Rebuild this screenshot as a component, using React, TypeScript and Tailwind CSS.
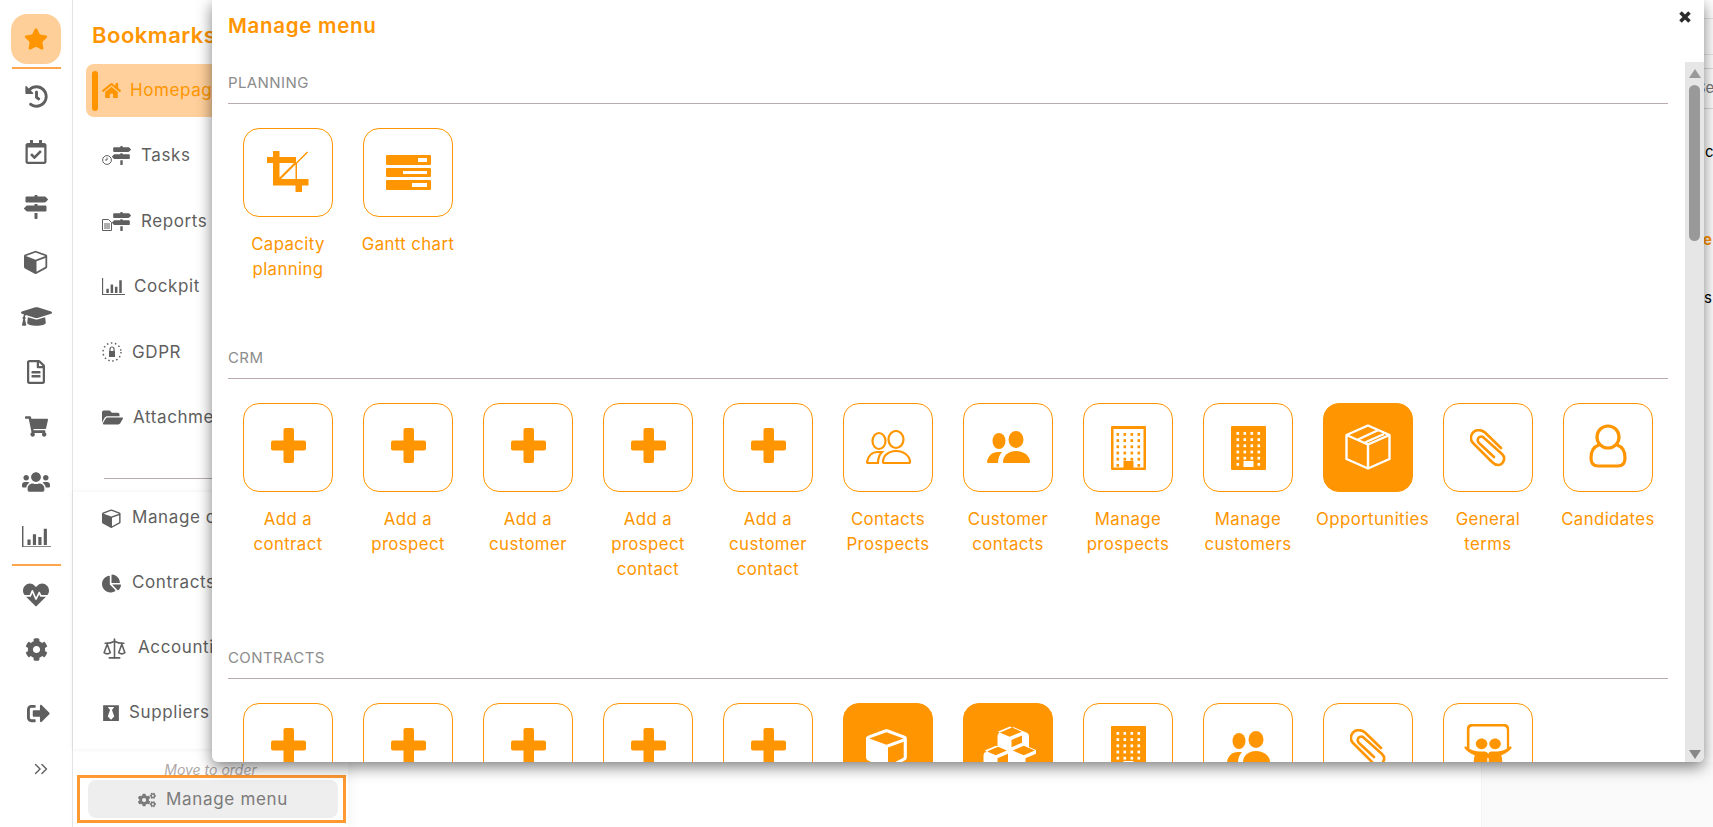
import type { ReactNode } from 'react';
import {
    FaBlackTie,
    FaChartPie,
    FaCog,
    FaCogs,
    FaFolderOpen,
    FaGraduationCap,
    FaHeartbeat,
    FaHistory,
    FaHome,
    FaMapSigns,
    FaRegCalendarCheck,
    FaRegFileAlt,
    FaShoppingCart,
    FaSignOutAlt,
    FaSlideshare,
    FaStar,
    FaUsers,
} from 'react-icons/fa';
import { ChevronsRight, Scale } from 'lucide-react';

const ORANGE = '#ff9500';

function ChartIcon({ size = 29 }: { size?: number }) {
    return (
        <svg width={size} height={size * 0.75} viewBox="0 0 32 24" fill="currentColor">
            <path d="M0 0h1.600v22.400H32V24H0z" />
            <path d="M6 15h3.500v6H6zM12 9h3.500v12H12zM18 12h3.500v9H18zM24 3h3.500v18H24z" />
        </svg>
    );
}

function CubeIcon({ size = 24, color = 'currentColor' }: { size?: number; color?: string }) {
    return (
        <svg width={size} height={size} viewBox="0 0 1792 1792" fill={color}>
            <path d="M896 1629l640-349v-636l-640 233v752zm-64-865l698-254-698-254-698 254zm832-252v768q0 35-18 65t-49 47l-704 384q-28 16-61 16t-61-16l-704-384q-31-17-49-47t-18-65v-768q0-40 23-73t61-47l704-256q22-8 44-8t44 8l704 256q38 14 61 47t23 73z" />
        </svg>
    );
}

function CubesIcon({ size = 56 }: { size?: number }) {
    return (
        <svg width={size} height={size * 0.875} viewBox="0 0 2048 1792" fill="#fff">
            <path d="M640 1632l384-192v-314l-384 164v342zm-64-454l404-173-404-173-404 173zm1088 454l384-192v-314l-384 164v342zm-64-454l404-173-404-173-404 173zm-448-293l384-165v-266l-384 164v267zm-64-379l441-189-441-189-441 189zm1216 676v416q0 36-19 67t-52 47l-448 224q-25 14-57 14t-57-14l-448-224q-4-2-7-4-2 2-7 4l-448 224q-25 14-57 14t-57-14l-448-224q-33-16-52-47t-19-67v-416q0-38 21.500-70t56.500-48l434-186v-400q0-38 21.500-70t56.500-48l448-192q23-10 50-10t50 10l448 192q35 16 56.500 48t21.500 70v400l434 186q36 16 57 48t21 70z" />
        </svg>
    );
}

function PlusIcon() {
    return (
        <svg width="35" height="35" viewBox="0 0 35 35" fill={ORANGE} className="mt-[-4px]">
            <rect x="12.500" y="0" width="10.500" height="35" rx="2" />
            <rect x="0" y="12.500" width="35" height="10" rx="2" />
        </svg>
    );
}

function CropIcon() {
    return (
        <svg width="42" height="42" viewBox="0 0 42 42" fill={ORANGE} className="mt-[-2px]">
            <path d="M6 0h6.500v6H29v5.500l11-11 1 1-11 11V28h11.500v6.500H35V41h-6.500v-6.500H6V12H0V6h6zm6.500 12v14.500L27 12zM28.500 28V13.500L14 28z" />
        </svg>
    );
}

function GanttIcon() {
    return (
        <svg width="45" height="35" viewBox="0 0 45 35" fill={ORANGE} className="mt-[-1px]">
            <path fillRule="evenodd" d="M1 0h43a1 1 0 0 1 1 1v8a1 1 0 0 1-1 1H1a1 1 0 0 1-1-1V1a1 1 0 0 1 1-1zm31 3v4h9V3z" />
            <path fillRule="evenodd" d="M1 13h43a1 1 0 0 1 1 1v7a1 1 0 0 1-1 1H1a1 1 0 0 1-1-1v-7a1 1 0 0 1 1-1zm16 3v3h24v-3z" />
            <path fillRule="evenodd" d="M1 25h43a1 1 0 0 1 1 1v8a1 1 0 0 1-1 1H1a1 1 0 0 1-1-1v-8a1 1 0 0 1 1-1zm25 3v4h15v-4z" />
        </svg>
    );
}

function PeopleIcon({ outline }: { outline?: boolean }) {
    const props = outline
        ? { fill: 'none', stroke: ORANGE, strokeWidth: 2.2 }
        : { fill: ORANGE };
    return (
        <svg width="45" height="34" viewBox="0 0 45 34" {...props} className="mt-[-2px]">
            <ellipse cx="13" cy="11" rx="6.500" ry="8" />
            <ellipse cx="30" cy="9.500" rx="7.500" ry="8.500" />
            <path d="M12 22c-6 0-10 4-11 10a1 1 0 0 0 1 1h10c0-4 1-8 4-11z" />
            <path d="M30 21c-8 0-13 5-13 11a1 1 0 0 0 1 1h25a1 1 0 0 0 1-1c0-6-6-11-14-11z" />
        </svg>
    );
}

function BuildingIcon({ outline }: { outline?: boolean }) {
    const dots: ReactNode[] = [];
    for (let r = 0; r < 6; r++) {
        for (let c = 0; c < 4; c++) {
            if (r === 5 && (c === 1 || c === 2)) continue;
            dots.push(
                <rect
                    key={`${r}-${c}`}
                    x={5.500 + c * 7}
                    y={outline ? 7 + r * 6.200 : 6 + r * 6.200}
                    width="2.600"
                    height="2.800"
                    fill={outline ? ORANGE : '#fff'}
                />
            );
        }
    }
    return (
        <svg width="35" height="44" viewBox="0 0 35 44">
            <rect width="35" height="44" rx="1" fill={ORANGE} />
            {outline && <rect x="2.500" y="3" width="30" height="38.500" fill="#fff" />}
            {dots}
            <rect x="12.500" y="35" width="10" height={outline ? 9 : 6} fill={outline ? ORANGE : '#fff'} />
        </svg>
    );
}

function BoxIcon() {
    return (
        <svg width="46" height="46" viewBox="0 0 46 46" fill="none" stroke="#fff" strokeWidth="2.400" strokeLinejoin="round" className="mt-[-2px]">
            <path d="M23 1.500 44.500 11v24L23 44.500 1.500 35V11z" />
            <path d="M1.500 11 23 20.500 44.500 11M23 20.500v24M13 15.500 33.500 6M20 18.500l19-8.500" />
        </svg>
    );
}

function ClipIcon() {
    return (
        <svg width="36" height="38" viewBox="0 0 36 38" fill="none" stroke={ORANGE} strokeWidth="2.600" strokeLinecap="round">
            <path d="M31 19 15 3.500C10-.5 4 1 2 5c-2 4-1 7 1 9l19 19c4 4 9 4 11 0 2-3 1-6-1-8L13 8c-2-1-5 0-5 2-1 2 0 3 1 4l15 14" />
        </svg>
    );
}

function UserOutlineIcon() {
    return (
        <svg width="38" height="44" viewBox="0 0 38 44" fill="none" stroke={ORANGE} strokeWidth="3.200" className="mt-[-3px]">
            <circle cx="19" cy="13" r="11" />
            <path d="M10 21C4 23 2 29 2 34c0 6 3 8 7 8h20c4 0 7-2 7-8 0-5-2-11-8-13" />
        </svg>
    );
}

// tiny clock and document that sit on the signpost of Tasks and Reports
function SmallClock() {
    return (
        <svg width="10" height="10" viewBox="0 0 10 10" fill="none" stroke="currentColor" strokeWidth="1">
            <circle cx="5" cy="5" r="4.400" />
            <path d="M5 2.500V5H3" />
        </svg>
    );
}

function SmallDoc() {
    return (
        <svg width="10" height="12" viewBox="0 0 10 12" fill="none" stroke="currentColor" strokeWidth="1">
            <path d="M.5.500h6l3 3v8h-9zM2 5h6M2 7h6M2 9h6" />
        </svg>
    );
}

function GdprIcon() {
    return (
        <svg width="20" height="20" viewBox="0 0 20 20" fill="currentColor">
            <circle cx="10" cy="10" r="9" fill="none" stroke="currentColor" strokeWidth="1.500" strokeDasharray="1.500 2.600" />
            <path d="M7 9h6v6H7z" />
            <path d="M8 9V7a2 2 0 0 1 4 0v2" fill="none" stroke="currentColor" strokeWidth="1.200" />
        </svg>
    );
}

type Tile = { label: string; icon: ReactNode; filled?: boolean; labelClass?: string };

const plus = <PlusIcon />;

const planning: Tile[] = [
    { label: 'Capacity\nplanning', icon: <CropIcon /> },
    { label: 'Gantt chart', icon: <GanttIcon /> },
];

const crm: Tile[] = [
    { label: 'Add a\ncontract', icon: plus },
    { label: 'Add a\nprospect', icon: plus },
    { label: 'Add a\ncustomer', icon: plus },
    { label: 'Add a\nprospect\ncontact', icon: plus },
    { label: 'Add a\ncustomer\ncontact', icon: plus },
    { label: 'Contacts\nProspects', icon: <PeopleIcon outline /> },
    { label: 'Customer\ncontacts', icon: <PeopleIcon /> },
    { label: 'Manage\nprospects', icon: <BuildingIcon outline /> },
    { label: 'Manage\ncustomers', icon: <BuildingIcon /> },
    { label: 'Opportunities', icon: <BoxIcon />, filled: true, labelClass: 'ml-[9px]' },
    { label: 'General\nterms', icon: <ClipIcon /> },
    { label: 'Candidates', icon: <UserOutlineIcon /> },
];

// labels of this row fall below the dialog's fold
const contracts: Tile[] = [
    { label: '', icon: plus },
    { label: '', icon: plus },
    { label: '', icon: plus },
    { label: '', icon: plus },
    { label: '', icon: plus },
    { label: '', icon: <CubeIcon size={44} color="#fff" />, filled: true },
    { label: '', icon: <CubesIcon />, filled: true },
    { label: '', icon: <BuildingIcon /> },
    { label: '', icon: <PeopleIcon /> },
    { label: '', icon: <ClipIcon /> },
    { label: '', icon: <FaSlideshare size={48} color={ORANGE} /> },
];

function TileRow({ tiles }: { tiles: Tile[] }) {
    return (
        <div className="mt-[24px] flex">
            {tiles.map((tile, i) => (
                <div key={i} className="flex w-[120px] flex-col items-center">
                    <div
                        className={
                            tile.filled
                                ? 'flex h-[89px] w-[90px] items-center justify-center rounded-[16px] border border-[#ff9500] bg-[#ff9500]'
                                : 'flex h-[89px] w-[90px] items-center justify-center rounded-[16px] border border-[#ff9500] bg-white'
                        }
                    >
                        {tile.icon}
                    </div>
                    <div className={`${tile.labelClass ?? ''} mt-[15px] text-center text-[16.800px] leading-[25px] tracking-[0.4px] whitespace-pre-line text-[#ff9500]`}>
                        {tile.label}
                    </div>
                </div>
            ))}
        </div>
    );
}

function Section({ title, tiles }: { title: string; tiles: Tile[] }) {
    return (
        <section className="mb-[63px]">
            <div className="h-[34px] border-b border-[#b9abab] pt-px text-[15px] leading-[24px] tracking-[0.4px] text-[#8c8c8c]">
                {title}
            </div>
            <TileRow tiles={tiles} />
        </section>
    );
}

const railTop = [
    <FaHistory size={23} />,
    <FaRegCalendarCheck size={24} />,
    <FaMapSigns size={24} />,
    <CubeIcon size={25} />,
    <FaGraduationCap size={31} />,
    <FaRegFileAlt size={24} />,
    <FaShoppingCart size={23} />,
    <FaUsers size={28} />,
    <ChartIcon />,
];

const bookmarks = [
    {
        label: 'Tasks',
        icon: (
            <span className="flex items-end">
                <SmallClock />
                <FaMapSigns size={19} />
            </span>
        ),
        gap: 'ml-[10px]',
    },
    {
        label: 'Reports',
        icon: (
            <span className="flex items-end">
                <SmallDoc />
                <FaMapSigns size={19} />
            </span>
        ),
        gap: 'ml-[10px]',
    },
    { label: 'Cockpit', icon: <ChartIcon size={23} />, gap: 'ml-[9px]' },
    { label: 'GDPR', icon: <GdprIcon />, gap: 'ml-[10px]' },
    { label: 'Attachments', icon: <FaFolderOpen size={21} />, gap: 'ml-[10px]' },
];

const shortcuts = [
    { label: 'Manage contracts', icon: <CubeIcon size={20} />, gap: 'ml-[10px]' },
    { label: 'Contracts', icon: <FaChartPie size={19} />, gap: 'ml-[11px]' },
    { label: 'Accounting', icon: <Scale size={25} strokeWidth={1.500} />, gap: 'ml-[11px]' },
    { label: 'Suppliers', icon: <FaBlackTie size={18} />, gap: 'ml-[9px]' },
];

export default function App() {
    return (
        <div
            className="relative flex h-[827px] w-[1713px] overflow-hidden bg-white text-[#5f5f5f]"
            style={{ fontFamily: 'Inter, "Noto Sans", sans-serif' }}
        >
            {/* Icon rail */}
            <nav className="flex w-[73px] shrink-0 flex-col items-center border-r border-[#e4e4e4] pt-[14px]">
                <div className="flex h-[50px] w-[50px] items-center justify-center rounded-[16px] bg-[#ffcf99]">
                    <FaStar size={24} color={ORANGE} />
                </div>
                <div className="mt-[3px] h-[2px] w-[49px] bg-[#ffa64d]" />
                {railTop.map((icon, i) => (
                    <div key={i} className="flex h-[55px] w-full items-center justify-center">
                        {icon}
                    </div>
                ))}
                <div className="h-[2px] w-[49px] bg-[#ffa64d]" />
                <div className="mt-[1px] flex h-[55px] w-full items-center justify-center">
                    <FaHeartbeat size={26} />
                </div>
                <div className="flex h-[55px] w-full items-center justify-center">
                    <FaCog size={23} />
                </div>
                <div className="mt-[9px] flex h-[55px] w-full items-center justify-center pl-[5px]">
                    <FaSignOutAlt size={23} />
                </div>
                <div className="flex h-[55px] w-full items-center justify-center pl-[10px]">
                    <ChevronsRight size={22} strokeWidth={1.500} />
                </div>
            </nav>

            {/* Bookmarks panel */}
            <aside className="flex w-[275px] shrink-0 flex-col shadow-[4px_0_10px_rgba(0,0,0,0.04)]">
                <h2 className="mt-[22px] ml-[19px] text-[22px] leading-[26px] font-semibold tracking-[0.5px] whitespace-nowrap text-[#ff9500]">
                    Bookmarks
                </h2>
                <div className="mt-[16px] ml-[13px] flex h-[53px] items-center rounded-[8px] bg-[#ffd09b] pl-[6px]">
                    <div className="h-[40px] w-[6px] rounded-full bg-[#ff9500]" />
                    <FaHome size={19} color={ORANGE} className="ml-[4px]" />
                    <span className="ml-[9px] pt-px text-[17px] tracking-[0.6px] text-[#ff9500]">Homepage</span>
                </div>
                <div className="mt-[6px] flex flex-col pl-[29px]">
                    {bookmarks.map(item => (
                        <div key={item.label} className="flex h-[65.500px] items-center">
                            {item.icon}
                            <span className={`${item.gap} text-[17px] tracking-[0.6px] whitespace-nowrap`}>{item.label}</span>
                        </div>
                    ))}
                </div>
                <div className="mt-[27px] ml-[31px] h-px bg-[#b9abab]" />
                <div className="mt-[13px] h-[257px] pl-[29px] shadow-[0_0_5px_rgba(0,0,0,0.07)]">
                    <div className="-mt-[6px] flex flex-col">
                        {shortcuts.map(item => (
                            <div key={item.label} className="flex h-[65px] items-center">
                                {item.icon}
                                <span className={`${item.gap} text-[17px] tracking-[0.6px] whitespace-nowrap`}>{item.label}</span>
                            </div>
                        ))}
                    </div>
                </div>
                <div className="mt-[13px] text-center text-[14px] leading-[16px] text-[#b0a8a8] italic">Move to order</div>
                <div className="mt-[-3px] ml-[4px] flex h-[48px] w-[269px] items-center justify-end border-[3px] border-[#ff9a33] pr-[5px]">
                    <button
                        type="button"
                        className="flex h-[38px] w-[250px] items-center justify-center gap-[10px] rounded-[8px] bg-[#eeeeee] pt-[2px] text-[17px] tracking-[0.7px] text-[#7b7b7b]"
                    >
                        <FaCogs size={18} />
                        Manage menu
                    </button>
                </div>
            </aside>

            {/* Page behind the dialog */}
            <main className="flex-1" />
            <div className="flex w-[232px] shrink-0 flex-col overflow-hidden border-l border-[#f3f3f3] bg-[#fafafa]">
                <div className="h-[762px] bg-white pt-[18px] pl-[221px] text-[15px] whitespace-nowrap text-black">
                    <div className="h-[36px] border-t border-[#e5e5e5]" />
                    <div className="h-[14px] border-t border-[#e5e5e5]" />
                    <div className="-ml-[7px] h-[40px] border-t border-[#dddddd] pt-[8px] pl-[7px] text-[#777]">
                        <span className="-ml-[7px]">Search</span>
                    </div>
                    <div className="border-t border-[#dddddd] pt-[32px] pl-[2px]">c</div>
                    <div className="mt-[65px] font-bold text-[#ff9500]">e</div>
                    <div className="mt-[36px] pl-[1px]">s</div>
                </div>
            </div>

            {/* Manage menu dialog */}
            <div className="absolute top-0 left-[212px] h-[762px] w-[1492px] overflow-hidden rounded-b-[6px] bg-white pl-[16px] shadow-[0_5px_15px_rgba(0,0,0,0.5)]">
                <h2 className="pt-[13px] text-[20.500px] leading-[26px] font-semibold tracking-[0.7px] text-[#ff9500]">
                    Manage menu
                </h2>
                <div className="mt-[31px] w-[1440px]">
                    <Section title="PLANNING" tiles={planning} />
                    <Section title="CRM" tiles={crm} />
                    <Section title="CONTRACTS" tiles={contracts} />
                </div>
                <svg width="12" height="12" viewBox="0 0 12 12" fill="none" stroke="#2b2b2b" strokeWidth="3.600" className="absolute top-[11px] right-[13px]">
                    <path d="M1.500 1.500l9 9M10.500 1.500l-9 9" />
                </svg>
                {/* Scrollbar */}
                <div className="absolute top-[62px] right-0 flex h-[700px] w-[19px] flex-col items-center bg-[#e6e6e6]">
                    <div className="mt-[7px] h-0 w-0 border-x-[6px] border-b-[9px] border-x-transparent border-b-[#999]" />
                    <div className="mt-[7px] h-[156px] w-[11px] rounded-full bg-[#999]" />
                    <div className="mt-auto mb-[3px] h-0 w-0 border-x-[6px] border-t-[9px] border-x-transparent border-t-[#888]" />
                </div>
            </div>
        </div>
    );
}
